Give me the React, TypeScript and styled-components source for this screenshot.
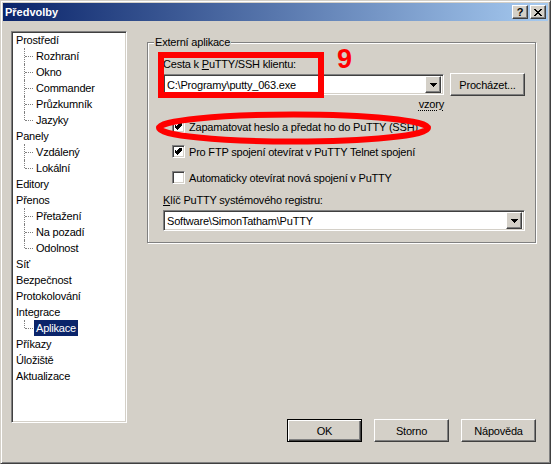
import React from "react";
import styled, { createGlobalStyle, css } from "styled-components";

const FACE = "#d4d0c8";

const Global = createGlobalStyle`
  html, body { margin: 0; padding: 0; background: ${FACE}; }
  body {
    font-family: "Liberation Sans", Arial, sans-serif;
    font-size: 11px;
    letter-spacing: -0.2px;
    color: #000;
  }
  button { letter-spacing: inherit; }
`;

const raised = css`
  border: 1px solid;
  border-color: #fff #404040 #404040 #fff;
  box-shadow: inset -1px -1px 0 #808080;
  background: ${FACE};
`;

const sunken = css`
  border: 1px solid;
  border-color: #808080 #fff #fff #808080;
  box-shadow: inset 1px 1px 0 #404040, inset -1px -1px 0 ${FACE};
  background: #fff;
`;

const Window = styled.div`
  position: relative;
  box-sizing: border-box;
  width: 551px;
  height: 464px;
  display: flex;
  flex-direction: column;
  padding: 2px;
  background: ${FACE};
  border: 1px solid;
  border-color: ${FACE} #404040 #404040 ${FACE};
  box-shadow: inset 1px 1px 0 #fff, inset -1px -1px 0 #808080;
`;

const TitleBar = styled.div`
  height: 18px;
  display: flex;
  align-items: center;
  padding: 0 2px 0 2px;
  background: linear-gradient(to right, #0a246a, #a6caf0);
`;

const Title = styled.span`
  flex: 1;
  color: #fff;
  font-weight: bold;
  font-size: 11px;
  letter-spacing: 0;
`;

const CaptionButton = styled.button`
  ${raised};
  box-sizing: border-box;
  width: 16px;
  height: 14px;
  padding: 0;
  margin-left: 2px;
  display: flex;
  align-items: center;
  justify-content: center;
  font: bold 11px "Liberation Sans", Arial, sans-serif;
  color: #000;
`;

const Body = styled.div`
  flex: 1;
  display: flex;
  align-items: stretch;
  padding: 10px 12px 0 8px;
`;

const Tree = styled.ul`
  ${sunken};
  box-sizing: border-box;
  width: 116px;
  height: 392px;
  margin: 0;
  padding: 0;
  list-style: none;
  overflow: hidden;
`;

const TreeRow = styled.li<{ $child?: boolean }>`
  height: 16px;
  display: flex;
  align-items: center;
  padding-left: ${p => (p.$child ? 0 : 2)}px;
  white-space: nowrap;
`;

const Connector = styled.span<{ $last?: boolean }>`
  position: relative;
  flex: none;
  width: 22px;
  height: 16px;

  &::before {
    content: "";
    position: absolute;
    left: 12px;
    top: 0;
    height: ${p => (p.$last ? 8 : 16)}px;
    border-left: 1px dotted #808080;
  }

  &::after {
    content: "";
    position: absolute;
    left: 13px;
    top: 8px;
    width: 8px;
    border-top: 1px dotted #808080;
  }
`;

const TreeLabel = styled.span<{ $selected?: boolean }>`
  padding: 0 2px;
  line-height: 16px;
  background: ${p => (p.$selected ? "#0a246a" : "transparent")};
  color: ${p => (p.$selected ? "#fff" : "#000")};
`;

const Side = styled.div`
  flex: 1;
  display: flex;
  flex-direction: column;
  margin-left: 20px;
  padding: 5px 0 19px;
`;

const Group = styled.fieldset`
  margin: 0;
  padding: 0;
  min-width: 0;
  border: 1px solid #808080;
  box-shadow: inset 1px 1px 0 #fff, 1px 1px 0 #fff;
`;

const Legend = styled.legend`
  margin-left: 6px;
  padding: 0 1px;
  line-height: 13px;
  background: ${FACE};
`;

const GroupContent = styled.div`
  display: flex;
  flex-direction: column;
  padding: 0 10px 11px 15px;
`;

const Label = styled.div<{ $gap: number }>`
  line-height: 13px;
  margin-top: ${p => p.$gap}px;
`;

const Key = styled.u`
  text-decoration: underline;
`;

const PathRow = styled.div`
  display: flex;
  align-items: flex-start;
  gap: 6px;
  margin-top: 2px;
`;

const PathColumn = styled.div`
  flex: 1;
  display: flex;
  flex-direction: column;
`;

const Combo = styled.div<{ $gap?: number }>`
  ${sunken};
  box-sizing: border-box;
  height: 21px;
  margin-top: ${p => p.$gap ?? 0}px;
  display: flex;
  align-items: center;
  padding: 2px;
`;

const ComboText = styled.span`
  flex: 1;
  padding-left: 1px;
  white-space: nowrap;
  overflow: hidden;
`;

const DropButton = styled.span`
  ${raised};
  box-sizing: border-box;
  width: 16px;
  height: 17px;
  display: flex;
  align-items: center;
  justify-content: center;
`;

const Link = styled.span`
  align-self: flex-end;
  margin-top: 3px;
  line-height: 13px;
  text-decoration: underline dotted;
  text-underline-offset: 2px;
`;

const CheckRow = styled.label<{ $gap: number }>`
  display: flex;
  align-items: center;
  gap: 4px;
  height: 13px;
  margin-top: ${p => p.$gap}px;
  padding-left: 9px;
  white-space: nowrap;
`;

const CheckBox = styled.span`
  ${sunken};
  box-sizing: border-box;
  width: 13px;
  height: 13px;
  flex: none;
  display: flex;
  align-items: center;
  justify-content: center;
`;

const Button = styled.button<{ $default?: boolean }>`
  ${raised};
  box-sizing: border-box;
  width: 75px;
  height: 23px;
  padding: 0;
  font: 11px "Liberation Sans", Arial, sans-serif;
  color: #000;
  flex: none;
  ${p =>
    p.$default &&
    css`
      border-color: #000;
      box-shadow: inset 1px 1px 0 #fff, inset -1px -1px 0 #404040, inset -2px -2px 0 #808080;
    `}
`;

const ButtonRow = styled.div`
  margin-top: auto;
  display: flex;
  justify-content: flex-end;
  gap: 12px;
`;

const Markup = styled.svg`
  position: absolute;
  left: 0;
  top: 0;
  pointer-events: none;
`;

const Arrow = () => (
  <svg width="7" height="4" viewBox="0 0 7 4" shapeRendering="crispEdges">
    <path d="M0 0h7v1h-1v1h-1v1h-1v1h-1v-1h-1v-1h-1v-1h-1z" fill="#000" />
  </svg>
);

const Tick = () => (
  <svg width="7" height="7" viewBox="0 0 7 7" shapeRendering="crispEdges">
    <path d="M6 0h1v3h-1v1h-1v1h-1v1h-1v1h-1v-1h-1v-1h-1v-1h-1v-3h1v1h1v1h1v-1h1v-1h1v-1h1z" fill="#000" />
  </svg>
);

const CloseGlyph = () => (
  <svg width="8" height="7" viewBox="0 0 8 7" shapeRendering="crispEdges">
    <path d="M0 0h2v1h1v1h2v-1h1v-1h2v1h-1v1h-1v1h-1v1h1v1h1v1h1v1h-2v-1h-1v-1h-2v1h-1v1h-2v-1h1v-1h1v-1h1v-1h-1v-1h-1v-1h-1z" fill="#000" />
  </svg>
);

type Node = { label: string; children?: string[] };

const tree: Node[] = [
  { label: "Prostředí", children: ["Rozhraní", "Okno", "Commander", "Průzkumník", "Jazyky"] },
  { label: "Panely", children: ["Vzdálený", "Lokální"] },
  { label: "Editory" },
  { label: "Přenos", children: ["Přetažení", "Na pozadí", "Odolnost"] },
  { label: "Síť" },
  { label: "Bezpečnost" },
  { label: "Protokolování" },
  { label: "Integrace", children: ["Aplikace"] },
  { label: "Příkazy" },
  { label: "Úložiště" },
  { label: "Aktualizace" },
];

const selected = "Aplikace";

function App() {
  return (
    <>
      <Global />
      <Window>
        <TitleBar>
          <Title>Předvolby</Title>
          <CaptionButton>?</CaptionButton>
          <CaptionButton>
            <CloseGlyph />
          </CaptionButton>
        </TitleBar>

        <Body>
          <Tree>
            {tree.map(node => (
              <React.Fragment key={node.label}>
                <TreeRow>
                  <TreeLabel $selected={node.label === selected}>{node.label}</TreeLabel>
                </TreeRow>
                {node.children?.map((child, i) => (
                  <TreeRow key={child} $child>
                    <Connector $last={i === node.children!.length - 1} />
                    <TreeLabel $selected={child === selected}>{child}</TreeLabel>
                  </TreeRow>
                ))}
              </React.Fragment>
            ))}
          </Tree>

          <Side>
            <Group>
              <Legend>Externí aplikace</Legend>
              <GroupContent>
                <Label $gap={9}>
                  Cesta k <Key>P</Key>uTTY/SSH klientu:
                </Label>
                <PathRow>
                  <PathColumn>
                    <Combo $gap={1}>
                      <ComboText>C:\Programy\putty_063.exe</ComboText>
                      <DropButton>
                        <Arrow />
                      </DropButton>
                    </Combo>
                    <Link>vzory</Link>
                  </PathColumn>
                  <Button>Procházet...</Button>
                </PathRow>

                <CheckRow $gap={9}>
                  <CheckBox>
                    <Tick />
                  </CheckBox>
                  Zapamatovat heslo a předat ho do PuTTY (SSH)
                </CheckRow>
                <CheckRow $gap={12}>
                  <CheckBox>
                    <Tick />
                  </CheckBox>
                  Pro FTP spojení otevírat v PuTTY Telnet spojení
                </CheckRow>
                <CheckRow $gap={13}>
                  <CheckBox />
                  Automaticky otevírat nová spojení v PuTTY
                </CheckRow>

                <Label $gap={10}>
                  <Key>K</Key>líč PuTTY systémového registru:
                </Label>
                <Combo $gap={3}>
                  <ComboText>Software\SimonTatham\PuTTY</ComboText>
                  <DropButton>
                    <Arrow />
                  </DropButton>
                </Combo>
              </GroupContent>
            </Group>

            <ButtonRow>
              <Button $default>OK</Button>
              <Button>Storno</Button>
              <Button>Nápověda</Button>
            </ButtonRow>
          </Side>
        </Body>

        <Markup width="551" height="464" viewBox="0 0 551 464">
          <rect x="160" y="54" width="160" height="40" fill="none" stroke="#f00" strokeWidth="6" />
          <ellipse cx="292.5" cy="127" rx="134.5" ry="13.5" fill="none" stroke="#f00" strokeWidth="6" />
          <text
            x="336"
            y="67"
            fill="#f00"
            fontFamily="Liberation Sans, Arial, sans-serif"
            fontWeight="bold"
            fontSize="27"
          >
            9
          </text>
        </Markup>
      </Window>
    </>
  );
}

export default App;
